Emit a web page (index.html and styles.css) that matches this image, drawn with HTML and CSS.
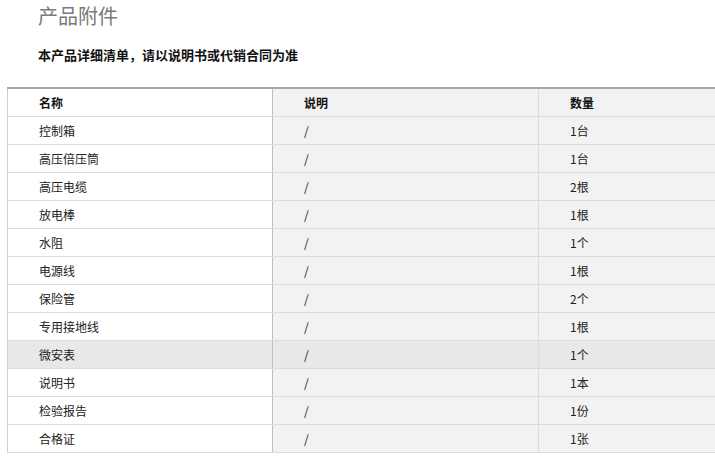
FILE: index.html
```html
<!DOCTYPE html>
<html lang="zh">
<head>
<meta charset="utf-8">
<title>产品附件</title>
<link rel="stylesheet" href="styles.css">
</head>
<body>
<div class="page">
  <h1 class="title">产品附件</h1>
  <p class="note">本产品详细清单，请以说明书或代销合同为准</p>
  <div class="table-wrap">
    <table class="parts">
      <thead>
        <tr><th class="c1">名称</th><th class="c2">说明</th><th class="c3">数量</th></tr>
      </thead>
      <tbody>
        <tr><td class="c1">控制箱</td><td class="c2">/</td><td class="c3">1台</td></tr>
        <tr><td class="c1">高压倍压筒</td><td class="c2">/</td><td class="c3">1台</td></tr>
        <tr><td class="c1">高压电缆</td><td class="c2">/</td><td class="c3">2根</td></tr>
        <tr><td class="c1">放电棒</td><td class="c2">/</td><td class="c3">1根</td></tr>
        <tr><td class="c1">水阻</td><td class="c2">/</td><td class="c3">1个</td></tr>
        <tr><td class="c1">电源线</td><td class="c2">/</td><td class="c3">1根</td></tr>
        <tr><td class="c1">保险管</td><td class="c2">/</td><td class="c3">2个</td></tr>
        <tr><td class="c1">专用接地线</td><td class="c2">/</td><td class="c3">1根</td></tr>
        <tr class="hover"><td class="c1">微安表</td><td class="c2">/</td><td class="c3">1个</td></tr>
        <tr><td class="c1">说明书</td><td class="c2">/</td><td class="c3">1本</td></tr>
        <tr><td class="c1">检验报告</td><td class="c2">/</td><td class="c3">1份</td></tr>
        <tr><td class="c1">合格证</td><td class="c2">/</td><td class="c3">1张</td></tr>
      </tbody>
    </table>
  </div>
</div>
</body>
</html>
```

FILE: styles.css
```css
html, body {
  margin: 0;
  padding: 0;
  background: #fff;
  overflow: hidden;
}
body {
  font-family: "Noto Sans CJK SC", "Liberation Sans", sans-serif;
  color: #222;
}
.page {
  width: 715px;
  overflow: hidden;
}
.title {
  margin: 0;
  padding: 3px 0 0 38px;
  font-size: 20px;
  line-height: 26px;
  font-weight: normal;
  color: #7a7a7a;
}
.note {
  margin: 0;
  padding: 17px 0 0 38px;
  font-size: 13px;
  line-height: 18px;
  font-weight: bold;
  color: #111;
}
.table-wrap {
  padding: 23px 0 0 7px;
}
.parts {
  border-collapse: collapse;
  width: 796px;
  table-layout: fixed;
  border-top: 2px solid #a8a8a8;
  border-left: 1px solid #cfcfcf;
  font-size: 12px;
}
.parts th, .parts td {
  height: 27px;
  padding: 0 0 0 31px;
  text-align: left;
  border-bottom: 1px solid #dcdcdc;
  vertical-align: middle;
  line-height: 16px;
}
.parts th {
  font-weight: bold;
  color: #111;
}
.parts td {
  color: #222;
}
.parts .c1 {
  width: 233px;
  background: #fff;
  border-right: 1px solid #c5bcbe;
}
.parts .c2 {
  width: 234px;
  background: #f2f2f2;
  border-right: 1px solid #dcdcdc;
}
.parts .c3 {
  background: #f2f2f2;
}
.parts tr.hover td {
  background: #e8e8e8;
}
```
